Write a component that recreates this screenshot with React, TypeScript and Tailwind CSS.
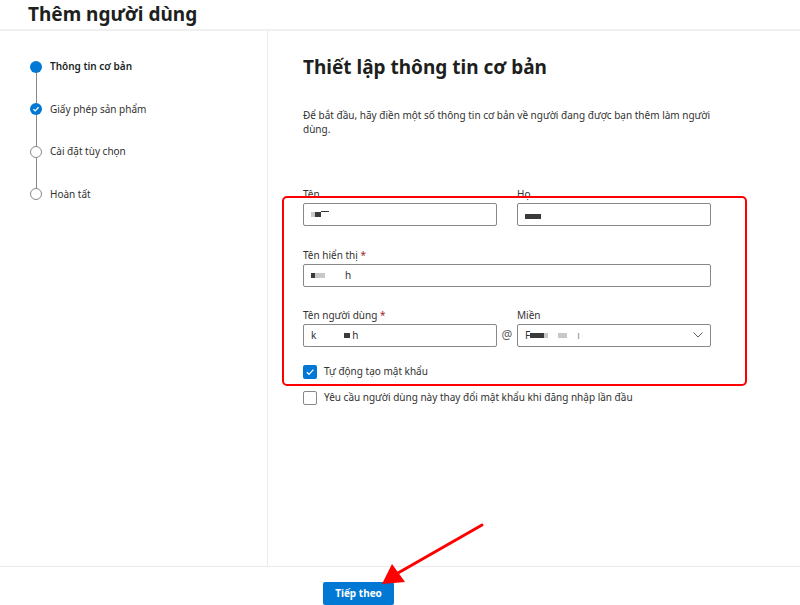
import React from 'react';

const font = { fontFamily: '"Noto Sans", "Open Sans", Arial, sans-serif' };

const steps = [
  { label: 'Thông tin cơ bản', state: 'current' },
  { label: 'Giấy phép sản phẩm', state: 'done' },
  { label: 'Cài đặt tùy chọn', state: 'todo' },
  { label: 'Hoàn tất', state: 'todo' },
];

// pixelated redaction blocks shown inside the inputs
const Blur: React.FC<{ w: number; dark?: boolean }> = ({ w, dark }) => (
  <span className={`inline-block h-[5px] align-middle ${dark ? 'bg-[#3a3a3a]' : 'bg-[#c8c8c8]'}`} style={{ width: w }} />
);

const StepDot: React.FC<{ state: string }> = ({ state }) => {
  if (state === 'current') return <span className="w-[12px] h-[12px] rounded-full bg-[#0078d4] shrink-0" />;
  if (state === 'done')
    return (
      <span className="w-[12px] h-[12px] rounded-full bg-[#0078d4] shrink-0 flex items-center justify-center">
        <svg width="8" height="8" viewBox="0 0 8 8">
          <path d="M1.4 4.2 L3.2 5.9 L6.6 2.3" fill="none" stroke="white" strokeWidth="1.3" />
        </svg>
      </span>
    );
  return <span className="w-[12px] h-[12px] rounded-full border-[1.5px] border-[#8a8886] bg-white shrink-0" />;
};

const Field: React.FC<{ label: string; required?: boolean; children: React.ReactNode; className?: string }> = ({ label, required, children, className }) => (
  <div className={`flex flex-col ${className ?? ''}`}>
    <label className="text-[10px] leading-[14px] text-[#323130] mb-[2px]">
      {label}
      {required && <span className="text-[#a4262c]"> *</span>}
    </label>
    {children}
  </div>
);

const Input: React.FC<{ children?: React.ReactNode; dropdown?: boolean }> = ({ children, dropdown }) => (
  <div className="h-[23px] border border-[#8a8886] rounded-[2px] bg-white flex items-center px-[7px] text-[10px] text-[#323130] gap-[1px]">
    <div className="flex-1 flex items-center">{children}</div>
    {dropdown && (
      <svg width="10" height="6" viewBox="0 0 10 6">
        <path d="M0.5 0.5 L5 5 L9.5 0.5" fill="none" stroke="#605e5c" strokeWidth="1" />
      </svg>
    )}
  </div>
);

const Check: React.FC<{ checked?: boolean; label: string }> = ({ checked, label }) => (
  <div className="flex items-center gap-[7px] h-[16px]">
    {checked ? (
      <span className="w-[14px] h-[14px] rounded-[2px] bg-[#0078d4] flex items-center justify-center">
        <svg width="10" height="10" viewBox="0 0 10 10">
          <path d="M1.8 5.2 L4 7.3 L8.4 2.6" fill="none" stroke="white" strokeWidth="1.2" />
        </svg>
      </span>
    ) : (
      <span className="w-[14px] h-[14px] rounded-[2px] border border-[#8a8886] bg-white" />
    )}
    <span className="text-[10px] text-[#323130]">{label}</span>
  </div>
);

export default function App() {
  return (
    <div className="w-[800px] h-[605px] bg-white relative overflow-hidden flex flex-col text-[#323130]" style={font}>
      <header className="h-[31px] border-b-2 border-[#f0f0f0] pl-[28px] flex items-start">
        <h1 className="text-[19px] font-bold leading-[28px] text-[#201f1e]">Thêm người dùng</h1>
      </header>

      <main className="flex h-[536px]">
        <aside className="w-[268px] border-r border-[#edebe9] pl-[30px] pt-[30px]">
          {steps.map((s, i) => (
            <div key={s.label} className="flex flex-col">
              <div className="flex items-center gap-[8px] h-[12px]">
                <StepDot state={s.state} />
                <span className={`text-[10px] ${s.state === 'current' ? 'font-semibold text-[#201f1e]' : 'text-[#323130]'}`}>{s.label}</span>
              </div>
              {i < steps.length - 1 && <div className="ml-[5.5px] w-px h-[30.5px] bg-[#8a8886]" />}
            </div>
          ))}
        </aside>

        <section className="flex-1 pl-[35px] pt-[22px]">
          <h2 className="text-[19px] font-bold leading-[28px] text-[#201f1e]">Thiết lập thông tin cơ bản</h2>
          <p className="mt-[27px] w-[412px] text-[10px] leading-[14px] text-[#323130]">
            Để bắt đầu, hãy điền một số thông tin cơ bản về người đang được bạn thêm làm người dùng.
          </p>

          <div className="mt-[51px] w-[408px] flex flex-col">
            <div className="flex gap-[20px]">
              <Field label="Tên" className="w-[194px]">
                <Input>
                  <Blur w={4} /> <Blur w={6} dark /><span className="inline-block w-[8px] h-px bg-[#3a3a3a] self-end mb-[6px]" />
                </Input>
              </Field>
              <Field label="Họ" className="w-[194px]">
                <Input>
                  <span className="mt-[4px] flex"><Blur w={16} dark /></span>
                </Input>
              </Field>
            </div>

            <Field label="Tên hiển thị" required className="mt-[22px]">
              <Input>
                <Blur w={4} dark /><Blur w={10} />
                <span className="ml-[20px]">h</span>
              </Input>
            </Field>

            <div className="flex items-end mt-[21px]">
              <Field label="Tên người dùng" required className="w-[194px]">
                <Input>
                  <span>k</span>
                  <span className="ml-[28px] flex"><Blur w={6} dark /></span>
                  <span className="ml-[2px]">h</span>
                </Input>
              </Field>
              <span className="w-[20px] h-[23px] flex items-center justify-center text-[12px] text-[#605e5c]">@</span>
              <Field label="Miền" className="w-[194px]">
                <Input dropdown>
                  <span className="text-[10px]">F</span><Blur w={14} dark /><Blur w={4} />
                  <span className="ml-[10px] flex"><Blur w={9} /></span>
                  <span className="ml-[10px] text-[#888]">ı</span>
                </Input>
              </Field>
            </div>

            <div className="mt-[17px] flex flex-col gap-[10px]">
              <Check checked label="Tự động tạo mật khẩu" />
              <Check label="Yêu cầu người dùng này thay đổi mật khẩu khi đăng nhập lần đầu" />
            </div>
          </div>
        </section>
      </main>

      <footer className="flex-1 border-t border-[#edebe9] pl-[323px] pt-[12px]">
        <button className="w-[71px] h-[23px] bg-[#0078d4] rounded-[2px] text-white text-[10px] font-bold">Tiếp theo</button>
      </footer>

      {/* annotation: red box around the fields */}
      <div className="absolute left-[282px] top-[196px] w-[465px] h-[190px] border-[2.5px] border-[#ff0000] rounded-[5px] pointer-events-none" />

      {/* annotation: arrow pointing at the button */}
      <svg className="absolute left-0 top-0 pointer-events-none" width="800" height="605">
        <line x1="482" y1="525" x2="398" y2="573" stroke="#ff0000" strokeWidth="3" strokeLinecap="round" />
        <polygon points="392,564 382,584 405,582" fill="#ff0000" />
      </svg>
    </div>
  );
}
